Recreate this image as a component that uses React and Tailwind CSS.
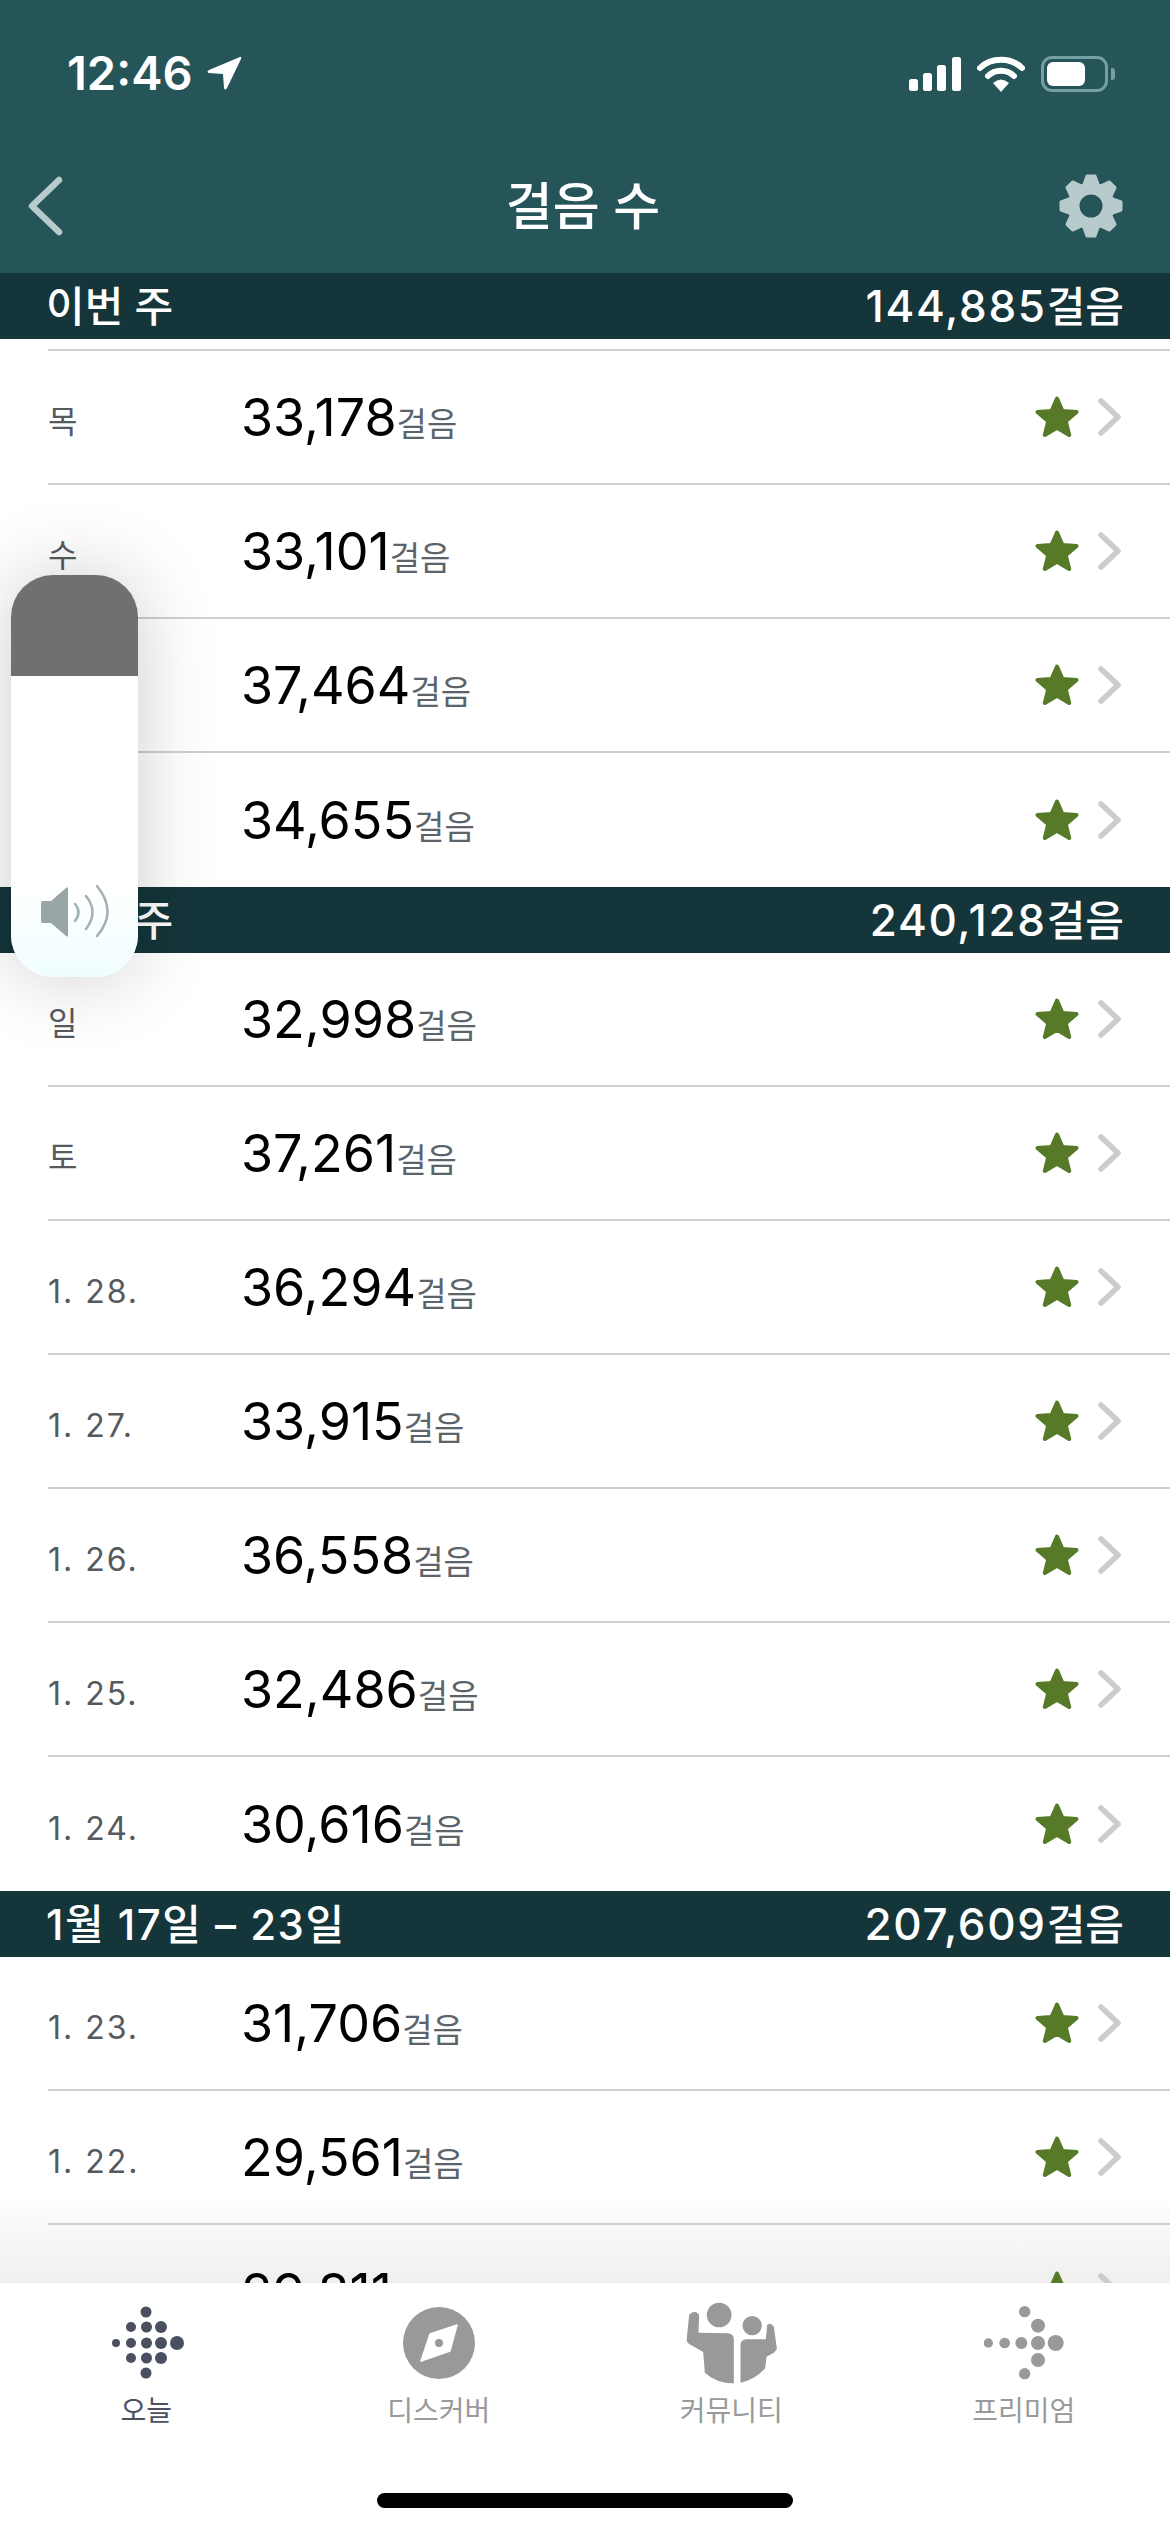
const FONT = "font-['Inter','Noto_Sans_CJK_KR',sans-serif]";

const sections = [
  {
    title: "이번 주",
    total: "144,885",
    rows: [
      { label: "목", steps: "33,178" },
      { label: "수", steps: "33,101" },
      { label: "화", steps: "37,464" },
      { label: "월", steps: "34,655" },
    ],
  },
  {
    title: "지난 주",
    total: "240,128",
    rows: [
      { label: "일", steps: "32,998" },
      { label: "토", steps: "37,261" },
      { label: "1. 28.", steps: "36,294" },
      { label: "1. 27.", steps: "33,915" },
      { label: "1. 26.", steps: "36,558" },
      { label: "1. 25.", steps: "32,486" },
      { label: "1. 24.", steps: "30,616" },
    ],
  },
  {
    title: "1월 17일 – 23일",
    titleClass: "tracking-[1.5px]",
    total: "207,609",
    rows: [
      { label: "1. 23.", steps: "31,706" },
      { label: "1. 22.", steps: "29,561" },
      { label: "1. 21.", steps: "29,811" },
    ],
  },
];

function Star() {
  return (
    <svg width="44" height="42" viewBox="0 0 44 42" className="block">
      <path
        d="M22 2.5 L27.5 15 L41.5 16 L30.8 25.3 L34.2 39 L22 31.7 L9.8 39 L13.2 25.3 L2.5 16 L16.5 15 Z"
        fill="#567a27"
        stroke="#567a27"
        strokeWidth="4"
        strokeLinejoin="round"
      />
    </svg>
  );
}

function Chevron() {
  return (
    <svg width="26" height="40" viewBox="0 0 26 40" className="block">
      <path d="M4 4 L21 20 L4 36" fill="none" stroke="#cccccc" strokeWidth="5.5" strokeLinecap="round" strokeLinejoin="round" />
    </svg>
  );
}

function Row({ label, steps, last }) {
  return (
    <div className={`h-[134px] flex items-center pr-[47px] ml-[48px] ${last ? "" : "border-b-2 border-[#cfcfcf]"}`}>
      <div className="w-[193px] text-[32px] tracking-[2px] text-[#555a5e] pt-[10px]">{label}</div>
      <div className="flex-1 flex items-baseline pt-[2px]">
        <span className="text-[52px] text-black">{steps}</span>
        <span className="text-[33px] text-[#5c646b]">걸음</span>
      </div>
      <div className="flex items-center gap-[18px]">
        <Star />
        <Chevron />
      </div>
    </div>
  );
}

function SectionBar({ title, titleClass = "", total }) {
  return (
    <div className="h-[66px] shrink-0 bg-[#14353a] text-white text-[42px] font-medium flex items-center justify-between pl-[46px] pr-[46px]">
      <span className={titleClass}>{title}</span>
      <span className="flex items-baseline">
        <span className="text-[44px] tracking-[1.7px]">{total}</span>
        <span>걸음</span>
      </span>
    </div>
  );
}

function StatusBar() {
  return (
    <div className="h-[124px] flex items-start justify-between pl-[67px] pr-[55px] pt-[50px] text-white">
      <div className="flex items-center gap-[13px]">
        <span className="text-[47px] leading-[46px] font-semibold">12:46</span>
        <svg width="36" height="36" viewBox="0 0 36 36">
          <path d="M34 2 L3 15 Q0 17 3 18 L17 19 L18 33 Q19 36 21 33 L35 4 Q36 1 34 2 Z" fill="#fff" />
        </svg>
      </div>
      <div className="flex items-center gap-[16px] pt-[6px]">
        <svg width="52" height="34" viewBox="0 0 52 34">
          <rect x="0" y="22" width="9" height="12" rx="2.5" fill="#fff" />
          <rect x="14" y="16" width="9" height="18" rx="2.5" fill="#fff" />
          <rect x="28" y="8" width="9" height="26" rx="2.5" fill="#fff" />
          <rect x="43" y="0" width="9" height="34" rx="2.5" fill="#fff" />
        </svg>
        <svg width="48" height="36" viewBox="0 0 48 36">
          <path d="M3 12 C14 1 34 1 45 12" fill="none" stroke="#fff" strokeWidth="6" strokeLinecap="round" />
          <path d="M11 20 C18 13 30 13 37 20" fill="none" stroke="#fff" strokeWidth="6" strokeLinecap="round" />
          <path d="M16 27 Q24 20 32 27 L24 36 Z" fill="#fff" />
        </svg>
        <div className="flex items-center">
          <div className="w-[67px] h-[36px] rounded-[11px] border-[3px] border-[#74a0a3] px-[3px] py-[3px]">
            <div className="w-[38px] h-full rounded-[6px] bg-white" />
          </div>
          <div className="w-[4px] h-[12px] rounded-r-[3px] bg-[#74a0a3] ml-[3px]" />
        </div>
      </div>
    </div>
  );
}

function Gear() {
  const teeth = [0, 45, 90, 135, 180, 225, 270, 315];
  return (
    <svg width="66" height="66" viewBox="0 0 66 66" className="block">
      {teeth.map((a) => (
        <path
          key={a}
          d="M29 3 L37 3 L41 14 L25 14 Z"
          fill="#b7cacc"
          stroke="#b7cacc"
          strokeWidth="3"
          strokeLinejoin="round"
          transform={`rotate(${a} 33 33)`}
        />
      ))}
      <circle cx="33" cy="33" r="17.5" fill="none" stroke="#b7cacc" strokeWidth="12" />
    </svg>
  );
}

function Header() {
  return (
    <div className="bg-[#265559] shrink-0">
      <StatusBar />
      <div className="h-[149px] grid grid-cols-3 items-center pl-[26px] pr-[46px] pt-[15px]">
        <svg width="38" height="60" viewBox="0 0 38 60" className="block">
          <path d="M33 4 L6 30 L33 56" fill="none" stroke="#b7cacc" strokeWidth="6.5" strokeLinecap="round" strokeLinejoin="round" />
        </svg>
        <span className="text-[51px] leading-none text-white font-medium text-center whitespace-nowrap pl-[16px]">걸음 수</span>
        <div className="justify-self-end">
          <Gear />
        </div>
      </div>
    </div>
  );
}

function TodayIcon() {
  const dots = [
    [145, 2309, 5.5],
    [130, 2324, 5],
    [145.5, 2324, 5.5],
    [160, 2324, 6],
    [115, 2340, 4],
    [130, 2340, 5],
    [145.5, 2340, 5.5],
    [160, 2340, 6],
    [176, 2340, 7],
    [130, 2355, 5],
    [145.5, 2355, 5.5],
    [160, 2355, 6],
    [145, 2370, 5.5],
  ];
  return (
    <svg width="80" height="80" viewBox="105 2300 80 80" className="block">
      {dots.map(([x, y, r], i) => (
        <circle key={i} cx={x} cy={y} r={r} fill="#4a5060" />
      ))}
    </svg>
  );
}

function DiscoverIcon() {
  return (
    <svg width="80" height="80" viewBox="-40 -40 80 80" className="block">
      <circle r="36" fill="#999999" />
      <path d="M18 -18 L11 8 L-18 18 L-9 -9 Z" fill="#fff" stroke="#fff" strokeWidth="1.5" strokeLinejoin="round" />
      <circle r="4" fill="#999999" />
    </svg>
  );
}

function CommunityIcon() {
  return (
    <svg width="97" height="85" viewBox="100 80 290 255" className="block">
      <circle cx="208" cy="125" r="37" fill="#999999" />
      <circle cx="307" cy="157" r="29" fill="#999999" />
      <path d="M118 125 Q135 105 148 125 L146 178 L235 180 Q252 182 252 198 L252 330 Q200 330 165 298 L160 236 L118 212 Q108 205 111 195 Z" fill="#999999" />
      <path d="M272 215 Q272 200 290 198 L348 198 L352 155 Q362 145 372 160 L381 225 Q381 232 372 238 L350 250 L346 285 Q315 320 272 328 Z" fill="#999999" />
    </svg>
  );
}

function PremiumIcon() {
  const dots = [
    [1122, 116, 17],
    [1162, 158, 21],
    [1013, 210, 14],
    [1062, 210, 16],
    [1112, 210, 18],
    [1162, 210, 21],
    [1215, 210, 24],
    [1162, 261, 21],
    [1122, 302, 17],
  ];
  return (
    <svg width="80" height="80" viewBox="1000 90 240 240" className="block">
      {dots.map(([x, y, r], i) => (
        <circle key={i} cx={x} cy={y} r={r} fill="#999999" />
      ))}
    </svg>
  );
}

const tabs = [
  { label: "오늘", icon: <TodayIcon />, active: true },
  { label: "디스커버", icon: <DiscoverIcon /> },
  { label: "커뮤니티", icon: <CommunityIcon /> },
  { label: "프리미엄", icon: <PremiumIcon /> },
];

function TabBar() {
  return (
    <div className="h-[249px] shrink-0 bg-white relative z-10">
      <div className="grid grid-cols-4 pt-[17px]">
        {tabs.map((t) => (
          <div key={t.label} className="flex flex-col items-center">
            <div className="h-[85px] flex items-center justify-center">{t.icon}</div>
            <span className={`text-[28px] leading-[36px] mt-[8px] ${t.active ? "text-[#4a5060]" : "text-[#9a9a9a]"}`}>{t.label}</span>
          </div>
        ))}
      </div>
      <div className="absolute left-[377px] bottom-[24px] w-[416px] h-[15px] rounded-full bg-black" />
    </div>
  );
}

function VolumeHud() {
  return (
    <div className="absolute left-[11px] top-[575px] w-[127px] h-[402px] rounded-[42px] overflow-hidden bg-[#f3ffff] z-20 shadow-[0_0_80px_rgba(0,0,0,0.2)] flex flex-col">
      <div className="h-[101px] bg-[#707070] shrink-0" />
      <div className="flex-1 bg-gradient-to-b from-white from-[70%] to-[#f0feff] flex items-end justify-center pb-[38px]">
        <svg width="72" height="54" viewBox="0 0 72 54" className="block ml-[3px]">
          <path d="M1 18 Q1 16 3 16 L11 16 L26 3 Q28 1 28 4 L28 50 Q28 53 26 51 L11 38 L3 38 Q1 38 1 36 Z" fill="#99a6a6" />
          <path d="M35 19 Q42 27 35 36" fill="none" stroke="#a5b1b1" strokeWidth="2.5" strokeLinecap="round" />
          <path d="M46 11 Q59 27 46 44" fill="none" stroke="#a5b1b1" strokeWidth="2.5" strokeLinecap="round" />
          <path d="M57 1 Q78 27 57 51" fill="none" stroke="#a5b1b1" strokeWidth="2.5" strokeLinecap="round" />
        </svg>
      </div>
    </div>
  );
}

export default function App() {
  return (
    <div className={`relative w-[1170px] h-[2532px] overflow-hidden bg-white flex flex-col ${FONT}`}>
      <Header />
      <div className="flex-1 min-h-0 overflow-hidden relative">
        <div className="absolute left-0 right-0 bottom-0 h-[90px] bg-gradient-to-b from-white to-[#efefef]" />
        <div className="relative">
          <SectionBar {...sections[0]} />
          <div className="ml-[48px] mt-[10px] h-[2px] bg-[#cfcfcf]" />
          {sections[0].rows.map((r, i) => (
            <Row key={r.label} {...r} last={i === sections[0].rows.length - 1} />
          ))}
          {sections.slice(1).map((s) => (
            <div key={s.title}>
              <SectionBar {...s} />
              {s.rows.map((r, i) => (
                <Row key={r.label} {...r} last={i === s.rows.length - 1} />
              ))}
            </div>
          ))}
        </div>
      </div>
      <TabBar />
      <VolumeHud />
    </div>
  );
}
